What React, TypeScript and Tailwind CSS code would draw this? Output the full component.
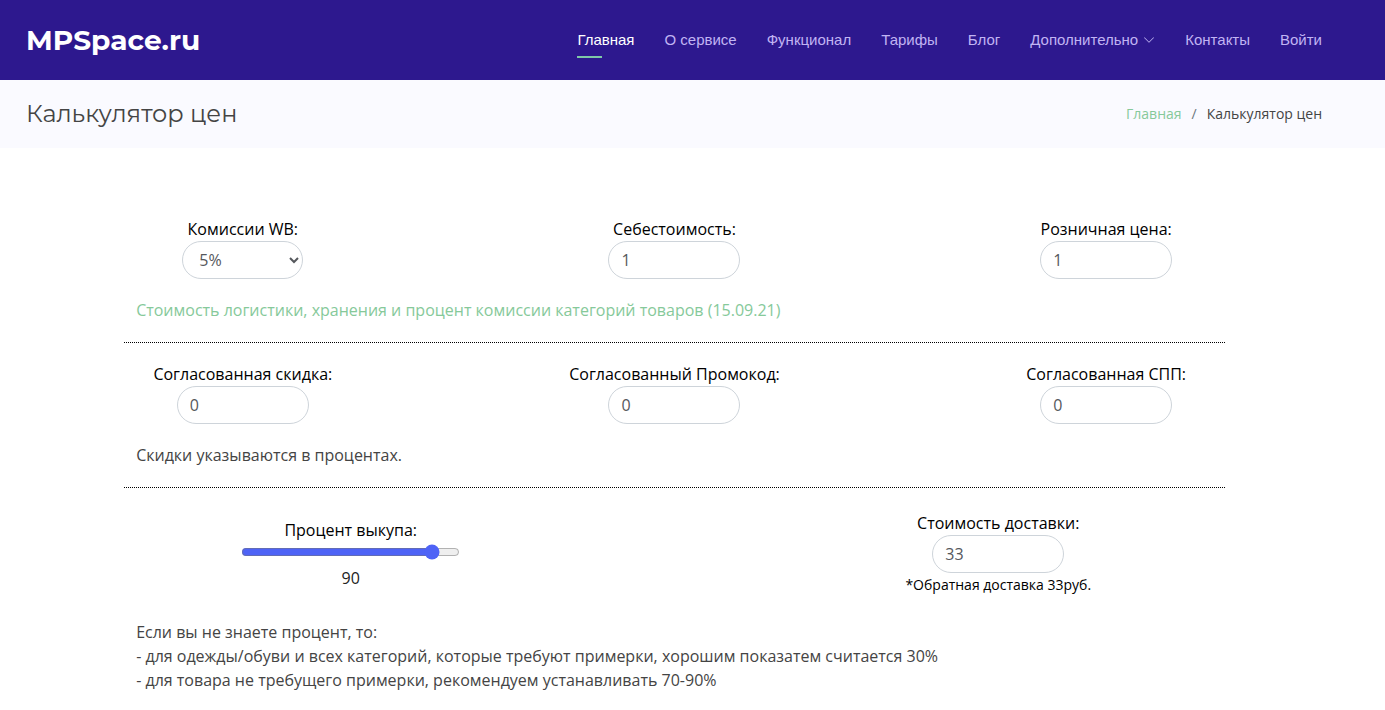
import { useState, type ReactNode } from 'react'
import { BsChevronDown } from 'react-icons/bs'

const navItems = [
  { label: 'Главная', active: true },
  { label: 'О сервисе' },
  { label: 'Функционал' },
  { label: 'Тарифы' },
  { label: 'Блог' },
  { label: 'Дополнительно', dropdown: true },
  { label: 'Контакты' },
  { label: 'Войти' },
]

const commissions = ['5%', '7%', '10%', '12%', '15%']

const fieldClass = 'h-[38px] rounded-full border border-[#ced4da] bg-white px-3 text-base text-[#55585c] outline-none'

interface FieldProps {
  id: string
  label: string
  children: ReactNode
}

function Field({ id, label, children }: FieldProps) {
  return (
    <div className="flex flex-col items-center">
      <label htmlFor={id} className="text-black">{label}</label>
      {children}
    </div>
  )
}

function NumberField({ id, label, initial }: { id: string; label: string; initial: string }) {
  const [value, setValue] = useState(initial)
  return (
    <Field id={id} label={label}>
      <input
        id={id}
        type="text"
        inputMode="numeric"
        value={value}
        onChange={(e) => setValue(e.target.value)}
        className={`${fieldClass} w-[132px]`}
      />
    </Field>
  )
}

function Header() {
  return (
    <header className="bg-[#2d188e]">
      <div className="flex h-20 items-center justify-between pl-[26px] pr-[63px]">
        <a href="#" className="font-[Montserrat,Inter,sans-serif] text-[28px] leading-8 font-bold text-white">
          MPSpace.ru
        </a>
        <nav className="flex items-center gap-[30px] font-['Liberation_Sans',Arial,sans-serif] text-[15px] leading-5">
          {navItems.map((item) => (
            <a
              key={item.label}
              href="#"
              className={`relative flex items-center gap-[5px] ${item.active ? 'text-white' : 'text-[#c1b4f3]'}`}
            >
              {item.label}
              {item.dropdown && <BsChevronDown size={12} />}
              {item.active && <span className="absolute -bottom-2 left-0 h-0.5 w-[25px] bg-[#7fc9a8]" />}
            </a>
          ))}
        </nav>
      </div>
    </header>
  )
}

function Breadcrumbs() {
  return (
    <section className="flex h-[68px] items-center justify-between bg-[#fafaff] pl-[26px] pr-[63px]">
      <h1 className="font-[Montserrat,Inter,sans-serif] text-2xl font-normal">Калькулятор цен</h1>
      <ol className="flex gap-[10px] text-sm leading-6">
        <li><a href="#" className="text-[#86c99a]">Главная</a></li>
        <li className="text-[#6c757d]">/</li>
        <li>Калькулятор цен</li>
      </ol>
    </section>
  )
}

export default function App() {
  const [commission, setCommission] = useState('5%')
  const [buyout, setBuyout] = useState(90)

  return (
    <div className="font-['Open_Sans',sans-serif] text-base leading-6 text-[#444444]">
      <Header />
      <Breadcrumbs />

      <main className="pt-[69px] pr-[63px] pb-4 pl-[27px]">
        {/* Commission and prices */}
        <div className="grid grid-cols-3">
          <Field id="commission" label="Комиссии WB:">
            <select
              id="commission"
              value={commission}
              onChange={(e) => setCommission(e.target.value)}
              className={`${fieldClass} w-[121px]`}
            >
              {commissions.map((c) => <option key={c}>{c}</option>)}
            </select>
          </Field>
          <NumberField id="cost" label="Себестоимость:" initial="1" />
          <NumberField id="retail" label="Розничная цена:" initial="1" />
        </div>
        <div className="mx-auto mt-[19px] w-[85%] border-b border-dotted border-black px-3 pb-5">
          <a href="#" className="block text-[#86c99a]">
            Стоимость логистики, хранения и процент комиссии категорий товаров (15.09.21)
          </a>
        </div>

        {/* Discounts */}
        <div className="mt-[19px] grid grid-cols-3">
          <NumberField id="discount" label="Согласованная скидка:" initial="0" />
          <NumberField id="promo" label="Согласованный Промокод:" initial="0" />
          <NumberField id="spp" label="Согласованная СПП:" initial="0" />
        </div>
        <div className="mx-auto mt-[19px] w-[85%] border-b border-dotted border-black px-3 pb-5">
          <p>Скидки указываются в процентах.</p>
        </div>

        {/* Buyout and delivery */}
        <div className="mt-[23px] grid grid-cols-2 items-center">
          <div className="flex flex-col items-center">
            <label htmlFor="buyout" className="text-black">Процент выкупа:</label>
            <input
              id="buyout"
              type="range"
              min={0}
              max={100}
              value={buyout}
              onChange={(e) => setBuyout(Number(e.target.value))}
              className="mt-0.5 mb-1.5 h-4 w-[219px] accent-[#4e63f6]"
            />
            <output htmlFor="buyout" className="text-[#222222]">{buyout}</output>
          </div>
          <div className="text-center">
            <NumberField id="delivery" label="Стоимость доставки:" initial="33" />
            <p className="text-sm leading-6 text-black">*Обратная доставка 33руб.</p>
          </div>
        </div>
        <div className="mx-auto mt-[23px] w-[85%] px-3">
          <p>Если вы не знаете процент, то:</p>
          <p>- для одежды/обуви и всех категорий, которые требуют примерки, хорошим показатем считается 30%</p>
          <p>- для товара не требущего примерки, рекомендуем устанавливать 70-90%</p>
        </div>
      </main>
    </div>
  )
}
